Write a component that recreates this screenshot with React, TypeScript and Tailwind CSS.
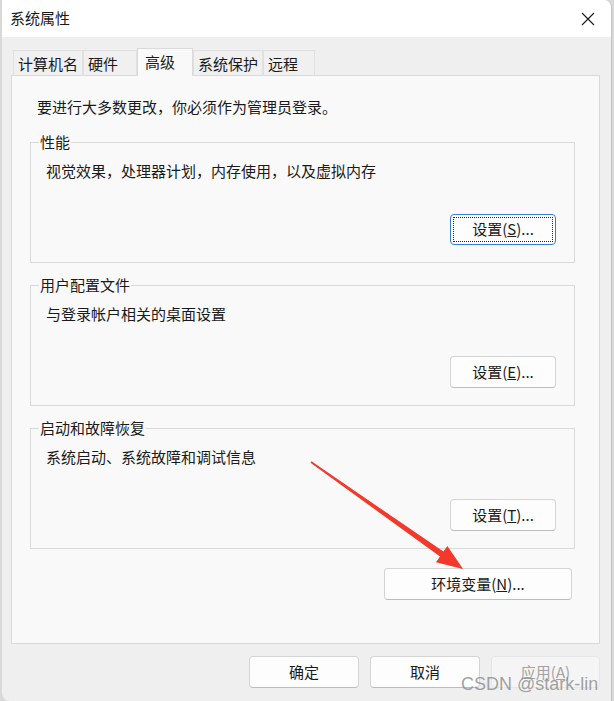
import React from 'react';

const font = { fontFamily: '"Noto Sans CJK SC", "Liberation Sans", sans-serif' };

function Btn({ children, w, disabled }: { children: React.ReactNode; w: string; disabled?: boolean }) {
  return (
    <div
      className={`${w} h-[32px] rounded-[4px] border flex items-center justify-center text-[15px] ${
        disabled
          ? 'bg-[#f5f5f5] border-[#e6e6e6] text-[#a3a3a3]'
          : 'bg-[#fdfdfd] border-[#d4d4d4] border-b-[#bdbdbd] text-[#1a1a1a]'
      }`}
    >
      {children}
    </div>
  );
}

function Group({ title, text, children }: { title: string; text: string; children: React.ReactNode }) {
  return (
    <div className="relative h-[121px] border border-[#dadada] flex flex-col pl-[15px] pr-[18px] pt-[18px] pb-[17px]">
      <span className="absolute left-[8px] -top-[11px] px-[1px] bg-[#f9f9f9] text-[15px] leading-[20px] text-[#1a1a1a]">
        {title}
      </span>
      <p className="text-[15px] leading-[20px] text-[#1a1a1a]">{text}</p>
      <div className="mt-auto self-end">{children}</div>
    </div>
  );
}

export default function App() {
  const tabs = ['计算机名', '硬件', '高级', '系统保护', '远程'];
  const widths = ['w-[70px]', 'w-[54px]', 'w-[56px]', 'w-[70px]', 'w-[52px]'];

  return (
    <div className="relative w-[614px] h-[701px] bg-[#d9d9d9] flex overflow-hidden" style={font}>
      <div className="ml-[2px] w-[610px] h-full bg-[#efeff0] rounded-tr-[8px] rounded-bl-[8px] border-r border-[#c4c4c4] flex flex-col overflow-hidden">
        {/* title bar */}
        <div className="h-[37px] bg-white flex items-center justify-between pl-[8px] pr-[16px]">
          <span className="text-[15px] text-[#1a1a1a]">系统属性</span>
          <svg width="14" height="14" viewBox="0 0 14 14">
            <path d="M1 1L13 13M13 1L1 13" stroke="#1a1a1a" strokeWidth="1.1" />
          </svg>
        </div>

        <div className="pl-[9px] pt-[11px]">
          {/* tabs */}
          <div className="flex items-end pl-[2px] h-[28px] -mb-px relative z-10">
            {tabs.map((t, i) =>
              i === 2 ? (
                <div
                  key={t}
                  className={`${widths[i]} h-[28px] bg-[#f9f9f9] border border-b-0 border-[#dadada] pl-[7px] pt-[2px] text-[15px] text-[#1a1a1a]`}
                >
                  {t}
                </div>
              ) : (
                <div
                  key={t}
                  className={`${widths[i]} h-[26px] bg-[#f0f0f1] border border-[#e0e0e0] border-b-[#dadada] pl-[4px] pt-[2px] text-[15px] leading-[22px] text-[#1a1a1a]`}
                >
                  {t}
                </div>
              )
            )}
          </div>

          {/* panel */}
          <div className="w-[589px] h-[569px] bg-[#f9f9f9] border border-[#dadada] flex flex-col">
            <p className="pl-[25px] pt-[21px] text-[15px] leading-[20px] text-[#1a1a1a]">要进行大多数更改，你必须作为管理员登录。</p>
            <div className="ml-[18px] w-[545px] mt-[25px] flex flex-col gap-[22px]">
              <Group title="性能" text="视觉效果，处理器计划，内存使用，以及虚拟内存">
                <div className="w-[106px] h-[31px] rounded-[4px] border border-[#2f7fd3] p-[2px] bg-[#fdfdfd]">
                  <div className="h-full border border-dotted border-[#222] flex items-center justify-center text-[15px] text-[#1a1a1a]">
                    设置(<span className="underline">S</span>)...
                  </div>
                </div>
              </Group>
              <Group title="用户配置文件" text="与登录帐户相关的桌面设置">
                <Btn w="w-[106px]">
                  设置(<span className="underline">E</span>)...
                </Btn>
              </Group>
              <Group title="启动和故障恢复" text="系统启动、系统故障和调试信息">
                <Btn w="w-[106px]">
                  设置(<span className="underline">T</span>)...
                </Btn>
              </Group>
            </div>
            <div className="self-end mr-[27px] mt-[19px]">
              <Btn w="w-[188px]">
                环境变量(<span className="underline">N</span>)...
              </Btn>
            </div>
          </div>

          {/* bottom buttons */}
          <div className="w-[589px] mt-[12px] flex justify-end gap-[11px]">
            <Btn w="w-[110px]">确定</Btn>
            <Btn w="w-[110px]">取消</Btn>
            <Btn w="w-[109px]" disabled>
              应用(<span className="underline">A</span>)
            </Btn>
          </div>
        </div>
      </div>

      {/* red annotation arrow */}
      <svg className="absolute left-0 top-0 pointer-events-none" width="614" height="701">
        <polygon
          points="311.5,461.3 443.4,551.6 447.4,545.9 463,569 436,562.3 440,556.6 310.5,462.7"
          fill="#f2392c"
        />
      </svg>

      {/* watermark */}
      <span
        className="absolute left-[461px] top-[673px] text-[18px] leading-[22px] text-[#8a8a8a]/80"
        style={{ fontFamily: '"Liberation Sans", sans-serif' }}
      >
        CSDN @stark-lin
      </span>
    </div>
  );
}
